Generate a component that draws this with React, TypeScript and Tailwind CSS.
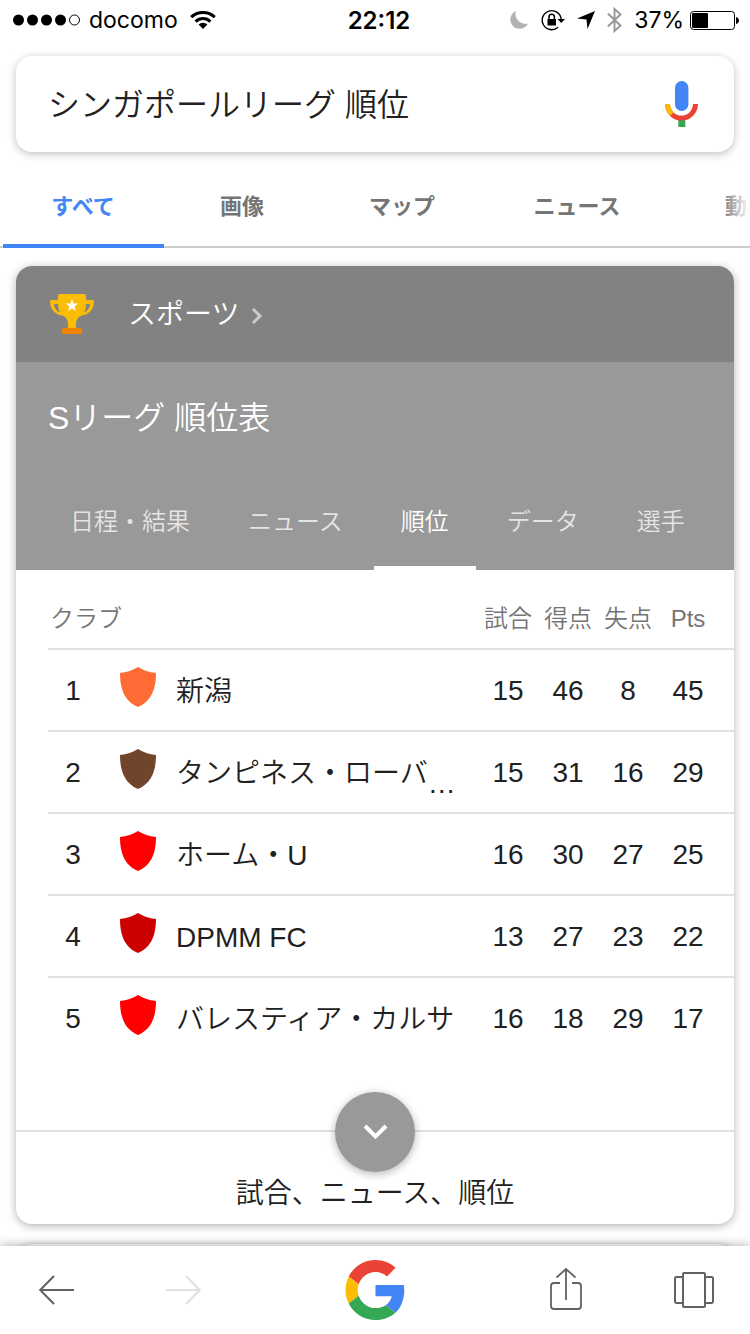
import React from "react";
import clsx from "clsx";

const searchTabs = [
  { label: "すべて", width: "w-[162px]" },
  { label: "画像", width: "w-[156px]" },
  { label: "マップ", width: "w-[164px]" },
  { label: "ニュース", width: "w-[186px]" },
  { label: "動画", width: "w-[154px]" },
];

const leagueTabs = ["日程・結果", "ニュース", "順位", "データ", "選手"];

const columns = ["試合", "得点", "失点", "Pts"];

const clubs = [
  { name: "新潟", color: "#ff6b35", stats: [15, 46, 8, 45] },
  {
    name: "タンピネス・ローバ",
    color: "#70452b",
    stats: [15, 31, 16, 29],
    clipped: true,
  },
  { name: "ホーム・U", color: "#ff0000", stats: [16, 30, 27, 25] },
  { name: "DPMM FC", color: "#cc0000", stats: [13, 27, 23, 22] },
  { name: "バレスティア・カルサ", color: "#ff0000", stats: [16, 18, 29, 17] },
];

const StatusBar = () => (
  <div className="grid h-10 shrink-0 grid-cols-[1fr_auto_1fr] items-center pr-[11px] pl-[13px] font-['Inter','Liberation_Sans',sans-serif] text-[23px] leading-7 text-black">
    <div className="flex items-center">
      <svg width="68" height="12" viewBox="0 0 68 12">
        <circle cx="5.5" cy="6" r="5.5" />
        <circle cx="19.5" cy="6" r="5.5" />
        <circle cx="33.5" cy="6" r="5.5" />
        <circle cx="47.5" cy="6" r="5.5" />
        <circle cx="61.5" cy="6" r="5" fill="none" stroke="#000" />
      </svg>
      <span className="ml-2">docomo</span>
      <svg className="ml-3" width="26" height="18" viewBox="0 0 26 18">
        <g fill="none" stroke="#000" strokeWidth="3">
          <path d="M1.2 6.2a17 17 0 0 1 23.6 0" />
          <path d="M5.6 10.6a10.6 10.6 0 0 1 14.8 0" />
        </g>
        <path d="M13 18l-4.400-4.400a6.200 6.200 0 0 1 8.800 0z" />
      </svg>
    </div>
    <span className="pt-0.5 pl-1.5 text-2xl font-semibold">22:12</span>
    <div className="flex items-center justify-end">
      <svg width="20" height="20" viewBox="0 0 20 20">
        <path
          d="M7 1A9.300 9.300 0 1 0 19 13.600A10 10 0 0 1 7 1z"
          fill="#b3b3b3"
        />
      </svg>
      <svg className="ml-3" width="24" height="22" viewBox="0 0 24 22">
        <path
          d="M20.200 10.500A9.500 9.500 0 1 0 17 18.300"
          fill="none"
          stroke="#000"
          strokeWidth="1.4"
        />
        <path d="M16.500 10H24l-3.800 4z" />
        <path d="M6.500 10h8.500v6.500H6.500z" />
        <path
          d="M8 10.500V8a2.700 2.700 0 0 1 5.400 0v2.500"
          fill="none"
          stroke="#000"
          strokeWidth="1.5"
        />
      </svg>
      <svg className="ml-3" width="18" height="18" viewBox="0 0 18 18">
        <path d="M18 0L10.500 18 9.500 8.500 0 7.500z" />
      </svg>
      <svg className="ml-3" width="15" height="26" viewBox="0 0 15 26">
        <path
          d="M.8 6.500L13.500 18.500 7.500 24V2l6 5.500L.8 19.500"
          fill="none"
          stroke="#999"
          strokeWidth="2"
        />
      </svg>
      <span className="ml-3">37%</span>
      <svg className="ml-1.5" width="49" height="19" viewBox="0 0 49 19">
        <rect
          x="0.500"
          y="0.500"
          width="44"
          height="18"
          rx="3"
          fill="none"
          stroke="#000"
        />
        <rect x="2" y="2" width="16" height="15" rx="1" />
        <path d="M46 6c4 1 4 6 0 7z" />
      </svg>
    </div>
  </div>
);

const MicIcon = () => (
  <svg width="34" height="48" viewBox="0 0 34 48">
    <rect x="10" y="1" width="13.400" height="30" rx="6.700" fill="#4285f4" />
    <path d="M13.300 40h7v7h-7z" fill="#34a853" />
    <path
      d="M2.500 24a14 14 0 0 0 28 0"
      fill="none"
      stroke="#ea4335"
      strokeWidth="5"
    />
    <path
      d="M2.500 24a14 14 0 0 0 4.300 10"
      fill="none"
      stroke="#fbbc05"
      strokeWidth="5"
    />
  </svg>
);

const TrophyIcon = () => (
  <svg width="44" height="40" viewBox="0 0 44 40">
    <path
      d="M9.500 0h25A1.500 1.500 0 0 1 36 1.500V6h6.500A1.500 1.500 0 0 1 44 7.500C44 15 39 20.500 32 21.500c-4 1-6 4.500-6 9V34h-8v-3.500c0-4.500-2-8-6-9C5 20.500 0 15 0 7.500A1.500 1.500 0 0 1 1.500 6H8V1.500A1.500 1.500 0 0 1 9.500 0z"
      fill="#fbbc05"
    />
    <path
      d="M4 10h4c0 3 .5 5.500 2 8.200C6.500 17 4.200 14 4 10zM40 10h-4c0 3-.5 5.500-2 8.200 3.500-1.200 5.800-4.200 6-8.200z"
      fill="#828282"
    />
    <rect x="12" y="34" width="20" height="6" rx="1.500" fill="#f08300" />
    <path
      d="M22 5l1.600 4.400 4.700.2-3.700 2.900 1.300 4.500-3.900-2.600-3.900 2.600 1.300-4.500-3.700-2.900 4.700-.2z"
      fill="#fff"
    />
  </svg>
);

const ShieldIcon = ({ color }: { color: string }) => (
  <svg className="block" width="36" height="40" viewBox="0 0 36 40">
    <path
      d="M18 0c5.500 3.500 11 5 18 6 0 15-4 28-18 34C4 34 0 21 0 6c7-1 12.500-2.500 18-6z"
      fill={color}
    />
  </svg>
);

const GoogleLogo = () => (
  <svg width="61" height="60" viewBox="0 0 48 48">
    <path
      fill="#ea4335"
      d="M24 9.500c3.540 0 6.710 1.220 9.210 3.600l6.850-6.850C35.900 2.380 30.470 0 24 0 14.620 0 6.510 5.380 2.560 13.220l7.980 6.190C12.430 13.720 17.740 9.500 24 9.500z"
    />
    <path
      fill="#4285f4"
      d="M46.980 24.550c0-1.570-.15-3.090-.38-4.550H24v9.020h12.940c-.58 2.960-2.260 5.480-4.780 7.180l7.730 6c4.510-4.180 7.090-10.360 7.090-17.650z"
    />
    <path
      fill="#fbbc05"
      d="M10.530 28.590c-.48-1.450-.76-2.990-.76-4.590s.27-3.140.76-4.590l-7.980-6.190C.92 16.460 0 20.120 0 24c0 3.880.92 7.540 2.560 10.780l7.970-6.190z"
    />
    <path
      fill="#34a853"
      d="M24 48c6.480 0 11.930-2.130 15.890-5.810l-7.730-6c-2.150 1.450-4.920 2.300-8.160 2.300-6.260 0-11.570-4.220-13.470-9.910l-7.980 6.190C6.510 42.620 14.620 48 24 48z"
    />
  </svg>
);

const Standings = () => (
  <div className="pl-8">
    <table className="w-full table-fixed border-separate border-spacing-0 text-[28px] leading-10 text-[#212121]">
      <colgroup>
        <col className="w-[50px]" />
        <col className="w-[78px]" />
        <col />
        <col className="w-[60px]" />
        <col className="w-[60px]" />
        <col className="w-[60px]" />
        <col className="w-[76px]" />
      </colgroup>
      <thead>
        <tr className="h-20 text-2xl leading-9 text-[#757575] *:border-b-2 *:border-[#e0e0e4]">
          <th colSpan={3} className="pt-5 pl-0.5 text-left font-[350]">
            クラブ
          </th>
          {columns.map((column) => (
            <th
              key={column}
              className="pt-5 text-center font-[350] whitespace-nowrap last:pr-4"
            >
              {column}
            </th>
          ))}
        </tr>
      </thead>
      <tbody>
        {clubs.map((club, i) => (
          <tr
            key={club.name}
            className="h-[82px] *:border-b-2 *:border-[#e0e0e4] last:*:border-transparent"
          >
            <td className="pt-0.5 text-center">{i + 1}</td>
            <td className="pb-1.5 pl-[22px]">
              <ShieldIcon color={club.color} />
            </td>
            <td className="font-[350] whitespace-nowrap">
              <div className="flex h-10 pt-0.5">
                <span>{club.name}</span>
                {club.clipped && <span className="pt-2.5">…</span>}
              </div>
            </td>
            {club.stats.map((stat, j) => (
              <td key={columns[j]} className="pt-0.5 text-center last:pr-4">
                {stat}
              </td>
            ))}
          </tr>
        ))}
      </tbody>
    </table>
  </div>
);

const Toolbar = () => (
  <nav className="relative z-10 flex h-22 shrink-0 items-center justify-between bg-white pr-9 pl-[39px] shadow-[0_-1px_10px_rgba(0,0,0,0.3)]">
    <div className="flex items-center gap-[92px]">
      <button aria-label="戻る">
        <svg width="35" height="30" viewBox="0 0 35 30">
          <path
            d="M35 15H1.500M15 1L1.200 15 15 29"
            fill="none"
            stroke="#5f6368"
            strokeWidth="2"
          />
        </svg>
      </button>
      <button aria-label="進む" disabled>
        <svg width="35" height="30" viewBox="0 0 35 30">
          <path
            d="M0 15h33.500M20 1l13.800 14L20 29"
            fill="none"
            stroke="#e0e0e0"
            strokeWidth="2"
          />
        </svg>
      </button>
    </div>
    <button aria-label="Google">
      <GoogleLogo />
    </button>
    <div className="flex items-center gap-[92px]">
      <button aria-label="共有">
        <svg width="32" height="44" viewBox="0 0 32 44">
          <path
            d="M10 15H4a3 3 0 0 0-3 3v20a3 3 0 0 0 3 3h24a3 3 0 0 0 3-3V18a3 3 0 0 0-3-3h-6M16 32V1M6.500 9.500L16 1l9.500 8.500"
            fill="none"
            stroke="#5f6368"
            strokeWidth="1.800"
          />
        </svg>
      </button>
      <button aria-label="タブ">
        <svg width="40" height="36" viewBox="0 0 40 36">
          <g fill="none" stroke="#5f6368" strokeWidth="2">
            <rect x="9" y="1" width="22" height="34" rx="1" />
            <path d="M9 5H2.500A1.500 1.500 0 0 0 1 6.500v23A1.500 1.500 0 0 0 2.500 31H9M31 5h6.500A1.500 1.500 0 0 1 39 6.500v23a1.500 1.500 0 0 1-1.500 1.500H31" />
          </g>
        </svg>
      </button>
    </div>
  </nav>
);

const App = () => {
  const [query, setQuery] = React.useState("シンガポールリーグ 順位");

  return (
    <div className="flex h-screen flex-col bg-white font-['Liberation_Sans','Noto_Sans_CJK_JP',sans-serif]">
      <StatusBar />
      <main className="min-h-0 flex-1 overflow-x-hidden overflow-y-auto [scrollbar-width:none]">
        <form className="mx-4 mt-4 flex h-24 items-center rounded-2xl bg-white pr-[35px] pl-8 shadow-[0_2px_8px_rgba(0,0,0,0.25)]">
          <input
            aria-label="検索"
            className="min-w-0 flex-1 pt-0.5 text-[32px] leading-12 font-[350] text-[#212121] outline-none"
            value={query}
            onChange={(e) => setQuery(e.target.value)}
          />
          <button type="button" aria-label="音声検索">
            <MicIcon />
          </button>
        </form>

        <div className="relative mt-4 h-20 overflow-hidden border-b-2 border-[#cccccc]">
          <div className="flex pl-0.5">
            {searchTabs.map((tab, i) => (
              <a
                key={tab.label}
                href="#"
                className={clsx(
                  "flex h-[78px] shrink-0 items-center justify-center text-[22px] leading-8 font-bold",
                  tab.width,
                  i === 0 ? "text-[#4285f4]" : "text-[#757575]"
                )}
              >
                {tab.label}
              </a>
            ))}
          </div>
          <div className="absolute inset-y-0 right-0 w-7 bg-linear-to-r from-transparent to-white" />
        </div>
        {/* active tab marker sits on top of the divider */}
        <div className="relative -mt-1 ml-[3px] h-1 w-[161px] bg-[#4285f4]" />

        <section className="mx-4 mt-[18px] overflow-hidden rounded-2xl bg-white shadow-[0_2px_10px_rgba(0,0,0,0.3)]">
          <a
            href="#"
            className="flex h-24 items-center bg-[#828282] pl-[34px] text-[28px] leading-10 font-[350] text-white"
          >
            <TrophyIcon />
            <span className="ml-[34px] pt-0.5">スポーツ</span>
            <svg className="mt-1 ml-3" width="12" height="16" viewBox="0 0 12 16">
              <path
                d="M2 1l7 7-7 7"
                fill="none"
                stroke="#cccccc"
                strokeWidth="3"
              />
            </svg>
          </a>
          <div className="bg-[#999999] text-white">
            <h1 className="px-8 pt-8 text-[32px] leading-12 font-[350]">
              Sリーグ 順位表
            </h1>
            <div className="flex gap-1 pt-12 pl-[27px]">
              {leagueTabs.map((tab) => (
                <button
                  key={tab}
                  className={clsx(
                    "h-20 border-b-4 px-[27px] pb-3 text-2xl font-[350] whitespace-nowrap",
                    tab === "順位"
                      ? "border-white text-white"
                      : "border-transparent text-white/75"
                  )}
                >
                  {tab}
                </button>
              ))}
            </div>
          </div>

          <Standings />

          <div className="relative mt-[70px] border-t-2 border-[#e0e0e0]">
            <button
              aria-label="もっと見る"
              className="absolute -top-10 left-1/2 flex size-20 -translate-x-1/2 items-center justify-center rounded-full bg-[#999999] shadow-[0_2px_8px_rgba(0,0,0,0.3)]"
            >
              <svg width="26" height="18" viewBox="0 0 26 18">
                <path
                  d="M3 3l10.500 10.500L24 3"
                  fill="none"
                  stroke="#fff"
                  strokeWidth="4"
                />
              </svg>
            </button>
            <p className="flex h-23 items-end justify-center pb-3 text-[28px] leading-9 font-[350] text-[#212121]">
              試合、ニュース、順位
            </p>
          </div>
        </section>

        <section className="mx-4 mt-5 h-24 rounded-2xl bg-white shadow-[0_1px_6px_rgba(0,0,0,0.3)]" />
      </main>
      <Toolbar />
    </div>
  );
};

export default App;
